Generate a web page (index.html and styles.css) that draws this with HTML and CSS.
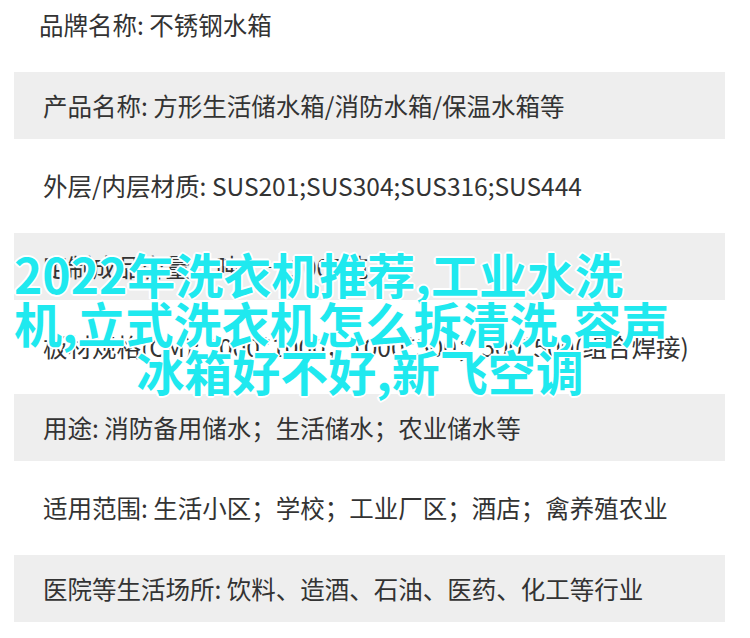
FILE: index.html
```html
<!DOCTYPE html>
<html lang="zh-CN">

<head>
    <meta charset="UTF-8">
    <meta name="viewport" content="width=device-width, initial-scale=1.0">
    <title>不锈钢水箱</title>
    <link rel="stylesheet" href="styles.css">
</head>

<body>
    <div class="page">
        <ul class="spec-list">
            <li class="spec-row">品牌名称: 不锈钢水箱</li>
            <li class="spec-row">产品名称: 方形生活储水箱/消防水箱/保温水箱等</li>
            <li class="spec-row">外层/内层材质: SUS201;SUS304;SUS316;SUS444</li>
            <li class="spec-row">定制成品容量: 1吨——1000吨</li>
            <li class="spec-row">板材规格(CM): 1000*1000；1000*500；500*500(组合焊接)</li>
            <li class="spec-row">用途: 消防备用储水；生活储水；农业储水等</li>
            <li class="spec-row">适用范围: 生活小区；学校；工业厂区；酒店；禽养殖农业</li>
            <li class="spec-row">医院等生活场所: 饮料、造酒、石油、医药、化工等行业</li>
        </ul>

        <!-- title laid over the table -->
        <h1 class="headline">
            <span class="headline-line">2022年洗衣机推荐,工业水洗</span>
            <span class="headline-line">机,立式洗衣机怎么拆清洗,容声</span>
            <span class="headline-line headline-last">冰箱好不好,新飞空调</span>
        </h1>
    </div>
</body>

</html>
```

FILE: styles.css
```css
body {
    margin: 0;
    background-color: #fff;
    font-family: "Noto Sans CJK SC", "Noto Sans", sans-serif;
    overflow: hidden;
}

.page {
    position: relative;
    height: 638px;
    overflow: hidden;
}

.spec-list {
    list-style: none;
    margin: -22px 0 0 14px;
    padding: 0;
    width: 711px;
}

.spec-row {
    padding-left: 29px;
    line-height: 94px;
    font-size: 24.5px;
    color: #333;
    white-space: nowrap;
}

.spec-row:nth-child(1) {
    padding-left: 25px;
}

.spec-row:nth-child(even) {
    background-color: #eee;
    line-height: 67px;
}

.headline {
    position: absolute;
    top: 249px;
    left: 14px;
    width: 692px;
    margin: 0;
    font-size: 48px;
    font-weight: bold;
    line-height: 48.5px;
    color: #1fe9ef;
    text-shadow: 2px 0 0 #fff, -2px 0 0 #fff, 0 2px 0 #fff, 0 -2px 0 #fff,
        1px 1px 1px #fff, -1px -1px 1px #fff, 1px -1px 1px #fff, -1px 1px 1px #fff;
}

.headline-line {
    display: block;
    white-space: nowrap;
}

.headline-last {
    text-align: center;
}
```
